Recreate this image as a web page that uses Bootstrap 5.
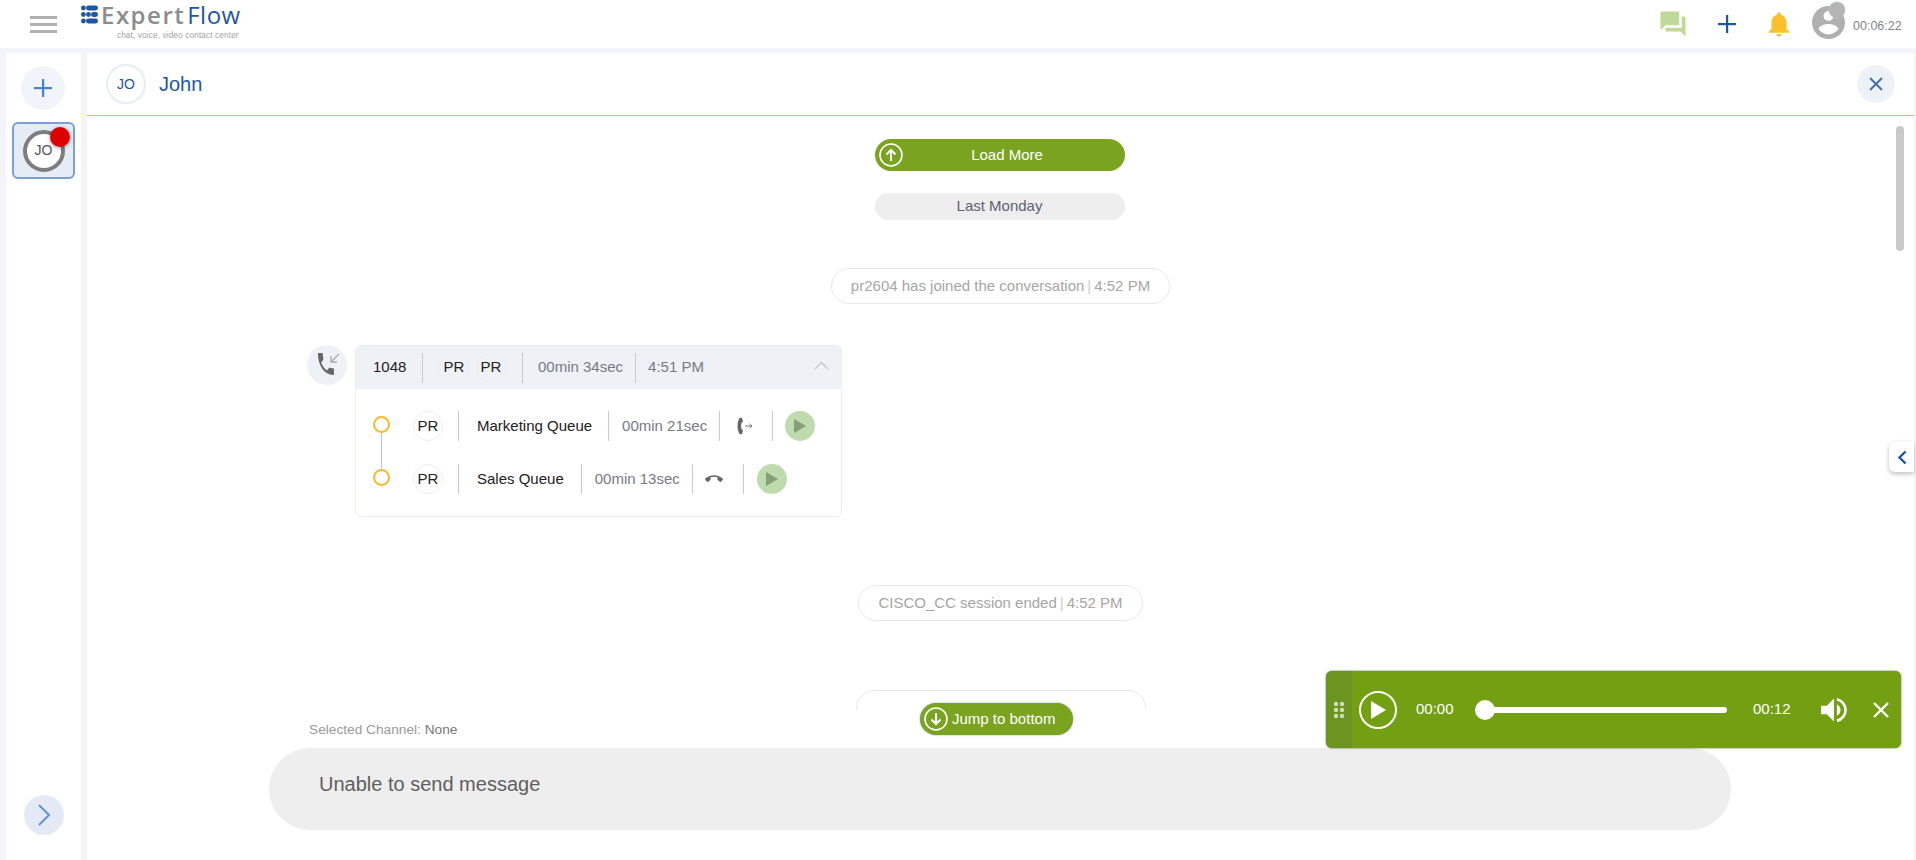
<!DOCTYPE html>
<html lang="en">
<head>
<meta charset="utf-8">
<title>ExpertFlow</title>
<link href="https://cdn.jsdelivr.net/npm/bootstrap@5.3.0/dist/css/bootstrap.min.css" rel="stylesheet">
<style>
html,body{height:860px;overflow:hidden}
body{background:#f3f5fa;font-family:"Liberation Sans",Arial,sans-serif;font-size:15px;color:#222}
.ef-top{height:48px;background:#fff;margin-bottom:5px;padding-left:30px;padding-right:14px}
.ef-burger{width:27px;gap:4px;flex:none}
.ef-burger i{display:block;height:3px;background:#b1b1b1}
.ef-logo{margin-left:24px;width:165px;height:48px;line-height:1;flex:none}
.ef-logomark{width:17px;height:19px;margin-right:3px;margin-top:5px;flex:none}
.ef-word{font-family:"Open Sans","Liberation Sans",sans-serif;font-size:24px;font-weight:600;letter-spacing:1.5px;color:#8b8d90;line-height:30px}
.ef-word b{color:#1f55a5;font-weight:500;letter-spacing:.5px;margin-left:2px}
.ef-tag{font-size:8.3px;color:#a3a3a3;text-align:right;margin-top:0;letter-spacing:.1px;padding-right:2px;line-height:10px}
.ef-icons svg{display:block}
.ef-chat{margin-right:30px}
.ef-plus{margin-right:28px}
.ef-bell{margin-right:18px}
.ef-avatar{width:33px;height:33px;margin-right:8px;margin-top:-4px}
.ef-dot{width:16px;height:16px;background:#b4b4b4;top:-4px;right:0;box-shadow:0 0 2px #b9cbe6}
.ef-clock{font-size:12.5px;color:#808488;margin-top:5px;width:49px}
.ef-shell{height:807px;padding-left:6px;padding-right:2px;gap:6px}
.ef-side{width:75px;background:#fff;flex:none}
.ef-newbtn{width:44px;height:44px;background:#f1f5fb;margin-top:13px;margin-left:15px}
.ef-tab{width:63px;height:57px;background:#e6ecf6;border:2px solid #7d9fd4;border-radius:6px;margin:12px 0 0 6px}
.ef-ring{width:42px;height:42px;background:#fff;border:4px solid #7e7e7e;font-size:14px;color:#555}
.ef-red{width:20px;height:20px;background:#dd0000;top:3px;right:3px;box-shadow:0 1px 4px rgba(0,0,0,.4)}
.ef-next{width:40px;height:40px;background:#e3eaf5;margin-left:18px;margin-bottom:25px}
.ef-main{background:#fff;min-width:0}
.ef-head{height:63px;border-bottom:1px solid #f0bd42;padding-left:19px;padding-right:19px;flex:none}
.ef-jo{width:40px;height:40px;border:2px solid #e8edf6;color:#1f55a5;font-size:14px}
.ef-name{font-size:20px;color:#1f55a5;margin-left:13px}
.ef-close{width:38px;height:38px;background:#eef1f7}
.ef-log{height:594px;overflow:hidden;flex:none}
.ef-log > *{flex:none}
.ef-load{width:250px;height:32px;background:#7aa31f;color:#fff;margin-top:23px;margin-right:1px;padding:0 0 0 4px}
.ef-load span{flex:1;text-align:center;padding-right:14px}
.ef-date{width:250px;height:27px;background:#eee;color:#5c6270;margin-top:22px;margin-right:1px;padding-right:1px}
.ef-note{height:36px;border:1px solid #e8e8e8;color:#a6a6a6;padding:0 19px;margin-top:48px;border-radius:18px}
.ef-note u{text-decoration:none;color:#ccc;margin:0 3px}
.ef-second{margin-top:68px}
.ef-third{margin-top:69px;width:290px}
.ef-callrow{margin:41px 0 0 220px;gap:8px;width:535px}
.ef-callicon{width:40px;height:40px;background:#eef1f6;flex:none}
.ef-callcard{width:487px;height:172px;border:1px solid #e8edf6;border-radius:6px;overflow:hidden;flex:none}
.ef-callhead{height:43px;background:#eef1f6;padding-left:17px;position:relative;flex:none}
.ef-sep{width:1px;background:#c9c9c9;height:30px;flex:none}
.ef-pr{width:30px;height:30px;border:1px solid #eceef1;color:#222;flex:none}
.ef-ts{color:#777b82}
.ef-up{margin-left:auto;margin-right:12px;margin-top:-5px}
.ef-steps{padding:22px 0 0 17px}
.ef-step{height:30px;position:relative}
.ef-step + .ef-step{margin-top:23px}
.ef-ringy{width:17px;height:17px;border:2px solid #fbb92d;background:#fff;flex:none;position:relative;z-index:1;margin-top:-4px}
.ef-line{position:absolute;left:8px;top:20px;width:1px;height:40px;background:#c4c4c4}
.ef-play{width:30px;height:30px;background:#bddbac;flex:none}
.ef-comp{height:150px;background:#fff;padding:12px 182px 0;flex:none}
.ef-sel{font-size:13.7px;color:#9a9a9a;padding-left:40px;height:26px;line-height:16px}
.ef-sel b{font-weight:400;color:#777}
.ef-input{width:1462px;height:82px;background:#eee;border-radius:41px;font-size:20px;color:#5f5f5f;padding:0 50px 11px}
.ef-jump{left:833px;top:650px;width:153px;height:32px;background:#7aa31f;color:#fff;box-shadow:0 0 2px #8aa6c8;padding-left:4px;gap:4px;z-index:3}
.ef-bar{right:10px;top:73px;width:8px;height:125px;background:#c9c9c9;border-radius:4px}
.ef-flap{right:0;top:389px;width:25px;height:30px;background:#fff;border-radius:6px 0 0 6px;box-shadow:0 2px 5px rgba(0,0,0,.25)}
.ef-player{left:1239px;top:618px;width:575px;height:77px;background:#72a012;border-radius:6px;box-shadow:0 0 2px rgba(40,60,0,.8);color:#fff;z-index:4;overflow:hidden}
.ef-grip{width:26px;height:100%;background:#6b9420;flex:none}
.ef-pbtn{width:38px;height:38px;border:2px solid #fff;margin-left:7px;flex:none}
.ef-pt{flex:none;width:38px}
.ef-track{width:251px;height:6px;background:#fff;border-radius:3px;position:relative;margin:0 26px 0 22px;flex:none}
.ef-thumb{width:20px;height:20px;background:#fff;left:-1px;top:-7px}
</style>
</head>
<body>
<header class="ef-top d-flex align-items-center">
  <div class="ef-burger d-flex flex-column"><i></i><i></i><i></i></div>
  <div class="ef-logo d-flex">
    <svg class="ef-logomark" viewBox="0 0 17 19" fill="#1f55a5"><circle cx="2.400" cy="3" r="2.400"/><rect x="5" y=".6" width="12" height="4.800" rx="2.400"/><circle cx="2.400" cy="9.500" r="2.400"/><circle cx="7.500" cy="9.500" r="2.400"/><rect x="10" y="7.100" width="7" height="4.800" rx="2.400"/><circle cx="2.400" cy="16" r="2.400"/><rect x="5" y="13.600" width="12" height="4.800" rx="2.400"/></svg>
    <div>
      <div class="ef-word">Expert<b>Flow</b></div>
      <div class="ef-tag">chat, voice, video contact center</div>
    </div>
  </div>
  <div class="ef-icons ms-auto d-flex align-items-center">
    <svg class="ef-chat" width="30" height="30" viewBox="0 0 24 24" fill="#c0d998"><path d="M21 6h-2v9H6v2c0 .55.45 1 1 1h11l4 4V7c0-.55-.45-1-1-1zm-4 6V3c0-.55-.45-1-1-1H3c-.55 0-1 .45-1 1v14l4-4h10c.55 0 1-.45 1-1z"/></svg>
    <svg class="ef-plus" width="18" height="18" viewBox="0 0 18 18" fill="#1f55a5"><rect x="8" width="2.200" height="18"/><rect y="8" width="18" height="2.200"/></svg>
    <svg class="ef-bell" width="30" height="30" viewBox="0 0 24 24" fill="#fbc02d"><path d="M12 22c1.100 0 2-.9 2-2h-4c0 1.100.89 2 2 2zm6-6v-5c0-3.070-1.640-5.640-4.500-6.320V4c0-.83-.67-1.500-1.500-1.500s-1.500.67-1.500 1.500v.68C7.630 5.360 6 7.920 6 11v5l-2 2v1h16v-1l-2-2z"/></svg>
    <div class="ef-avatar position-relative">
      <svg width="33" height="33" viewBox="2 2 20 20" fill="#b0b0b0"><path d="M12 2C6.480 2 2 6.480 2 12s4.480 10 10 10 10-4.480 10-10S17.520 2 12 2zm0 3c1.660 0 3 1.340 3 3s-1.340 3-3 3-3-1.340-3-3 1.340-3 3-3zm0 14.200c-2.500 0-4.710-1.280-6-3.220.03-1.990 4-3.080 6-3.080 1.990 0 5.970 1.090 6 3.080-1.290 1.940-3.500 3.220-6 3.220z"/></svg>
      <span class="ef-dot position-absolute rounded-circle"></span>
    </div>
    <div class="ef-clock">00:06:22</div>
  </div>
</header>

<div class="ef-shell d-flex">
  <aside class="ef-side d-flex flex-column">
    <div class="ef-newbtn rounded-circle d-flex align-items-center justify-content-center">
      <svg width="18" height="18" viewBox="0 0 18 18" fill="#4a80d8"><rect x="8" width="2.200" height="18"/><rect y="8" width="18" height="2.200"/></svg>
    </div>
    <div class="ef-tab position-relative d-flex align-items-center justify-content-center">
      <div class="ef-ring rounded-circle d-flex align-items-center justify-content-center">JO</div>
      <span class="ef-red position-absolute rounded-circle"></span>
    </div>
    <div class="ef-next rounded-circle d-flex align-items-center justify-content-center mt-auto">
      <svg width="12" height="22" viewBox="0 0 12 22" fill="none" stroke="#6b93d0" stroke-width="2"><path d="M1 1l10 10L1 21"/></svg>
    </div>
  </aside>

  <main class="ef-main flex-grow-1 d-flex flex-column position-relative">
    <div class="ef-head d-flex align-items-center">
      <div class="ef-jo rounded-circle d-flex align-items-center justify-content-center">JO</div>
      <div class="ef-name">John</div>
      <div class="ef-close rounded-circle d-flex align-items-center justify-content-center ms-auto">
        <svg width="14" height="14" viewBox="0 0 14 14" stroke="#3e6db0" stroke-width="1.800"><path d="M1 1l12 12M13 1L1 13"/></svg>
      </div>
    </div>

    <div class="ef-log d-flex flex-column">
      <div class="ef-load rounded-pill d-flex align-items-center align-self-center">
        <svg width="24" height="24" viewBox="0 0 24 24" fill="none" stroke="#fff" stroke-width="1.600"><circle cx="12" cy="12" r="11"/><path d="M12 18V7M7.500 11.500L12 7l4.500 4.500" stroke-width="2"/></svg>
        <span>Load More</span>
      </div>
      <div class="ef-date rounded-pill d-flex align-items-center justify-content-center align-self-center">Last Monday</div>
      <div class="ef-note d-flex align-items-center align-self-center">pr2604 has joined the conversation <u>|</u> 4:52 PM</div>

      <div class="ef-callrow d-flex">
        <div class="ef-callicon rounded-circle d-flex align-items-center justify-content-center">
          <svg width="26" height="26" viewBox="0 0 26 26"><path fill="#666" transform="translate(1.300 -2.600) scale(.89 1.22)" d="M6.620 10.790c1.440 2.830 3.760 5.140 6.590 6.590l2.200-2.200c.27-.27.67-.36 1.020-.24 1.120.37 2.330.57 3.570.57.55 0 1 .45 1 1V20c0 .55-.45 1-1 1-9.390 0-17-7.610-17-17 0-.55.45-1 1-1h3.500c.55 0 1 .45 1 1 0 1.250.2 2.450.57 3.570.11.35.03.74-.25 1.020l-2.200 2.200z" /><path d="M25 2l-8 8M17 4v6h6" fill="none" stroke="#aaa" stroke-width="1.300"/></svg>
        </div>
        <div class="ef-callcard card">
          <div class="ef-callhead d-flex align-items-center">
            <span style="width:49px">1048</span><span class="ef-sep"></span>
            <span class="ef-pr rounded-circle d-flex align-items-center justify-content-center ms-3 me-2">PR</span>
            <span class="ef-pr rounded-circle d-flex align-items-center justify-content-center me-3" style="margin-left:-1px">PR</span>
            <span class="ef-sep"></span>
            <span class="ef-ts me-2" style="margin-left:15px">00min 34sec</span><span class="ef-sep ms-1"></span>
            <span class="ef-ts" style="margin-left:12px">4:51 PM</span>
            <svg class="ef-up" width="15" height="9" viewBox="0 0 15 9" fill="none" stroke="#c8cbd0" stroke-width="1.600"><path d="M1 8l6.500-6.500L14 8"/></svg>
          </div>
          <div class="ef-steps">
            <div class="ef-step d-flex align-items-center">
              <span class="ef-ringy rounded-circle"></span><span class="ef-line"></span>
              <span class="ef-pr rounded-circle d-flex align-items-center justify-content-center" style="margin:0 15px 0 23px">PR</span>
              <span class="ef-sep"></span><span style="margin:0 16px 0 18px">Marketing Queue</span>
              <span class="ef-sep"></span><span class="ef-ts" style="margin:0 12px 0 13px">00min 21sec</span>
              <span class="ef-sep"></span>
              <svg style="margin:0 19px 0 17px" width="16" height="18" viewBox="0 0 16 18"><path fill="#666" d="M5 1l1 3.500-1.500 1.500c-.5 2 -.5 4.500 0 6l1.500 1.500L5 17c-1.500.8-2.500 0-3-1C0 12 0 6 2 2c.5-1 1.500-1.700 3-1z"/><path d="M8 9h7M12.500 6.700L15 9l-2.500 2.300" fill="none" stroke="#777" stroke-width="1"/></svg>
              <span class="ef-sep"></span>
              <span class="ef-play rounded-circle d-flex align-items-center justify-content-center" style="margin-left:12px"><svg width="12" height="14" viewBox="0 0 12 14" fill="#859f7a"><path d="M0 0l12 7-12 7z"/></svg></span>
            </div>
            <div class="ef-step d-flex align-items-center">
              <span class="ef-ringy rounded-circle"></span>
              <span class="ef-pr rounded-circle d-flex align-items-center justify-content-center" style="margin:0 15px 0 23px">PR</span>
              <span class="ef-sep"></span><span style="margin:0 17px 0 18px">Sales Queue</span>
              <span class="ef-sep"></span><span class="ef-ts" style="margin:0 12px 0 13px">00min 13sec</span>
              <span class="ef-sep"></span>
              <svg style="margin:0 20px 0 12px" width="18" height="18" viewBox="0 0 24 24"><path fill="#666" d="M12 9c-1.600 0-3.150.25-4.600.72v3.100c0 .39-.23.74-.56.900-.98.49-1.870 1.120-2.660 1.850-.18.18-.43.28-.7.28-.28 0-.53-.11-.71-.29L.29 13.080c-.18-.17-.29-.42-.29-.7 0-.28.11-.53.29-.71C3.340 8.780 7.460 7 12 7s8.660 1.780 11.710 4.670c.18.18.29.43.29.71 0 .28-.11.53-.29.71l-2.480 2.480c-.18.18-.43.29-.71.29-.27 0-.52-.11-.7-.28-.79-.74-1.690-1.360-2.670-1.850-.33-.16-.56-.5-.56-.9v-3.100C15.150 9.250 13.600 9 12 9z"/></svg>
              <span class="ef-sep"></span>
              <span class="ef-play rounded-circle d-flex align-items-center justify-content-center" style="margin-left:13px"><svg width="12" height="14" viewBox="0 0 12 14" fill="#859f7a"><path d="M0 0l12 7-12 7z"/></svg></span>
            </div>
          </div>
        </div>
      </div>

      <div class="ef-note ef-second d-flex align-items-center align-self-center">CISCO_CC session ended <u>|</u> 4:52 PM</div>
      <div class="ef-note ef-third align-self-center"></div>
    </div>

    <div class="ef-comp">
      <div class="ef-sel">Selected Channel: <b>None</b></div>
      <div class="ef-input d-flex align-items-center">Unable to send message</div>
    </div>

    <span class="ef-bar position-absolute"></span>
    <div class="ef-flap position-absolute d-flex align-items-center justify-content-center">
      <svg width="10" height="15" viewBox="0 0 10 15" fill="none" stroke="#1f55a5" stroke-width="2.400"><path d="M8.500 1.500L2.500 7.500l6 6"/></svg>
    </div>
    <div class="ef-jump position-absolute rounded-pill d-flex align-items-center">
      <svg width="24" height="24" viewBox="0 0 24 24" fill="none" stroke="#fff" stroke-width="1.600"><circle cx="12" cy="12" r="11"/><path d="M12 6v11M7.500 12.500L12 17l4.500-4.500" stroke-width="2"/></svg>
      <span>Jump to bottom</span>
    </div>

    <div class="ef-player position-absolute d-flex align-items-center">
      <div class="ef-grip d-flex align-items-center justify-content-center">
        <svg width="12" height="18" viewBox="0 0 12 18" fill="#cfdcb6"><circle cx="3" cy="3" r="2.200"/><circle cx="9" cy="3" r="2.200"/><circle cx="3" cy="9" r="2.200"/><circle cx="9" cy="9" r="2.200"/><circle cx="3" cy="15" r="2.200"/><circle cx="9" cy="15" r="2.200"/></svg>
      </div>
      <div class="ef-pbtn rounded-circle d-flex align-items-center justify-content-center">
        <svg width="15" height="18" viewBox="0 0 15 18" fill="#fff"><path d="M0 0l15 9L0 18z"/></svg>
      </div>
      <span class="ef-pt" style="margin-left:19px">00:00</span>
      <div class="ef-track"><span class="ef-thumb position-absolute rounded-circle"></span></div>
      <span class="ef-pt">00:12</span>
      <svg style="margin-left:30px" width="26" height="26" viewBox="3 3 18 18" fill="#fff"><path d="M3 9v6h4l5 5V4L7 9H3zm13.500 3c0-1.770-1.020-3.290-2.500-4.030v8.050c1.480-.73 2.500-2.250 2.500-4.020z"/><path d="M14 4.500c3.500.9 6 3.900 6 7.500s-2.500 6.600-6 7.500" fill="none" stroke="#fff" stroke-width="1.800"/></svg>
      <svg style="margin-left:26px" width="16" height="16" viewBox="0 0 16 16" stroke="#fff" stroke-width="2.400"><path d="M1 1l14 14M15 1L1 15"/></svg>
    </div>
  </main>
</div>
<script src="https://cdn.jsdelivr.net/npm/bootstrap@5.3.0/dist/js/bootstrap.bundle.min.js"></script>
</body>
</html>
